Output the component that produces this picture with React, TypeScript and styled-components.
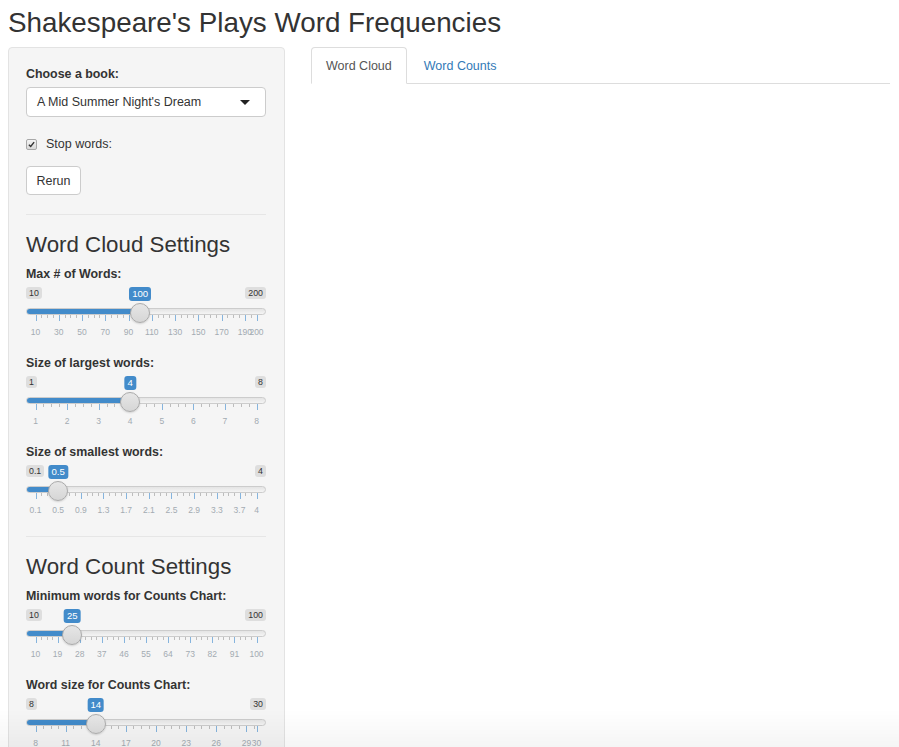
import styled, { createGlobalStyle } from "styled-components";

const GlobalStyle = createGlobalStyle`
  body {
    margin: 0;
    font-family: "Liberation Sans", Arial, sans-serif;
    font-size: 12.5px;
    color: #333;
    background: #fff;
  }
`;

const StyledPage = styled.div`
  padding: 8px 9px 0 8px;
`;

const StyledTitle = styled.h1`
  margin: 0 0 9px;
  font-size: 27.8px;
  line-height: 30px;
  font-weight: 500;
  color: #333;
`;

const StyledRow = styled.div`
  display: flex;
  align-items: flex-start;
  gap: 26px;
`;

const StyledWell = styled.div`
  width: 277px;
  box-sizing: border-box;
  flex-shrink: 0;
  min-height: 760px;
  padding: 18px 18px 0 17px;
  background: #f5f5f5;
  border: 1px solid #e3e3e3;
  border-radius: 4px;
`;

const StyledLabel = styled.div`
  font-weight: bold;
  font-size: 12.4px;
  line-height: 16px;
  margin-bottom: 5px;
`;

const StyledSelect = styled.div`
  height: 30px;
  box-sizing: border-box;
  display: flex;
  align-items: center;
  justify-content: space-between;
  padding: 0 15px 0 10px;
  background: #fff;
  border: 1px solid #ccc;
  border-radius: 4px;
`;

const StyledCaret = styled.span`
  width: 0;
  height: 0;
  border-left: 5px solid transparent;
  border-right: 5px solid transparent;
  border-top: 5px solid #222;
`;

const StyledCheckRow = styled.div`
  margin-top: 19px;
  height: 16px;
  display: flex;
  align-items: center;
  gap: 9px;
`;

const StyledCheckbox = styled.span`
  width: 9px;
  height: 9px;
  border: 1px solid #a8a8a8;
  border-radius: 2px;
  background: linear-gradient(#f4f4f4, #d9d9d9);
  display: flex;
  align-items: center;
  justify-content: center;
`;

const StyledButton = styled.div`
  margin-top: 14px;
  width: 55px;
  height: 29px;
  box-sizing: border-box;
  display: flex;
  align-items: center;
  justify-content: center;
  background: #fff;
  border: 1px solid #ccc;
  border-radius: 4px;
`;

const StyledDivider = styled.hr<{ $top: number }>`
  margin: ${(p) => p.$top}px 0 18px;
  border: 0;
  border-top: 1px solid #e6e6e6;
`;

const StyledHeading = styled.h3`
  margin: 0 0 9px;
  font-size: 22.3px;
  line-height: 24px;
  font-weight: 500;
`;

const StyledSlider = styled.div`
  margin-bottom: 18px;
`;

const StyledIrs = styled.div`
  position: relative;
`;

const StyledEdgeRow = styled.div`
  margin-top: 1px;
  height: 12px;
  display: flex;
  justify-content: space-between;
`;

const StyledEdgeTag = styled.span`
  font-size: 8.8px;
  line-height: 12px;
  padding: 0 3px;
  background: #dedede;
  color: #333;
  border-radius: 3px;
`;

const StyledValueTag = styled.span`
  position: absolute;
  top: 0;
  z-index: 2;
  transform: translateX(-50%);
  font-size: 9.6px;
  line-height: 14px;
  padding: 0 3px;
  background: #428bca;
  color: #fff;
  border-radius: 3px;
  white-space: nowrap;
`;

const StyledTrack = styled.div`
  margin-top: 9px;
  height: 7px;
  box-sizing: border-box;
  background: linear-gradient(#e4e4e4, #f4f4f4);
  border: 1px solid #ccc;
  border-radius: 8px;
  overflow: hidden;
  position: relative;
`;

const StyledFill = styled.div`
  height: 100%;
  background: #428bca;
`;

const StyledHandle = styled.span`
  position: absolute;
  top: 15.5px;
  z-index: 2;
  width: 20px;
  height: 20px;
  box-sizing: border-box;
  transform: translateX(-50%);
  border-radius: 50%;
  border: 1px solid #aaa;
  background: linear-gradient(#e6e6e6, #d6d6d6);
  box-shadow: 0 1px 2px rgba(0, 0, 0, 0.15);
`;

const StyledGrid = styled.div`
  position: relative;
  height: 22px;
`;

const StyledTick = styled.span<{ $major: boolean }>`
  position: absolute;
  top: 0;
  width: 1px;
  height: ${(p) => (p.$major ? 6 : 3)}px;
  background: ${(p) => (p.$major ? "#86b4dd" : "#bdbdbd")};
`;

const StyledTickLabel = styled.span`
  position: absolute;
  top: 12px;
  transform: translateX(-50%);
  font-size: 8.5px;
  line-height: 10px;
  color: #a3abb2;
  white-space: nowrap;
`;

const StyledMain = styled.div`
  flex: 1;
`;

const StyledTabs = styled.div`
  display: flex;
  border-bottom: 1px solid #ddd;
`;

const StyledTab = styled.div<{ $active?: boolean }>`
  padding: 2px 14px 0;
  margin-right: 2px;
  margin-bottom: -1px;
  line-height: 33px;
  border: 1px solid ${(p) => (p.$active ? "#ddd" : "transparent")};
  border-bottom-color: transparent;
  border-radius: 4px 4px 0 0;
  background: ${(p) => (p.$active ? "#fff" : "transparent")};
  color: ${(p) => (p.$active ? "#555" : "#337ab7")};
`;

const StyledFade = styled.div`
  position: fixed;
  left: 0;
  right: 0;
  bottom: 0;
  height: 38px;
  pointer-events: none;
  background: linear-gradient(rgba(0, 0, 0, 0), rgba(0, 0, 0, 0.04));
`;

type SliderProps = {
  label: string;
  min: number;
  max: number;
  value: number;
  majors: number[];
  minorStep: number;
};

const fmt = (v: number) => String(Math.round(v * 100) / 100);

const Slider = ({ label, min, max, value, majors, minorStep }: SliderProps) => {
  const pos = (v: number) =>
    `calc(9.5px + ${(v - min) / (max - min)} * (100% - 19px))`;
  const minors: number[] = [];
  for (let v = min; v <= max + 1e-9; v += minorStep) {
    if (!majors.some((m) => Math.abs(m - v) < 1e-6)) minors.push(v);
  }
  return (
    <StyledSlider>
      <StyledLabel>{label}</StyledLabel>
      <StyledIrs>
        <StyledEdgeRow>
          <StyledEdgeTag>{fmt(min)}</StyledEdgeTag>
          <StyledEdgeTag>{fmt(max)}</StyledEdgeTag>
        </StyledEdgeRow>
        <StyledValueTag style={{ left: pos(value) }}>{fmt(value)}</StyledValueTag>
        <StyledTrack>
          <StyledFill style={{ width: pos(value) }} />
        </StyledTrack>
        <StyledHandle style={{ left: pos(value) }} />
        <StyledGrid>
          {minors.map((v) => (
            <StyledTick key={`s${v}`} $major={false} style={{ left: pos(v) }} />
          ))}
          {majors.map((v) => (
            <StyledTick key={`b${v}`} $major style={{ left: pos(v) }} />
          ))}
          {majors.map((v) => (
            <StyledTickLabel key={`t${v}`} style={{ left: pos(v) }}>
              {fmt(v)}
            </StyledTickLabel>
          ))}
        </StyledGrid>
      </StyledIrs>
    </StyledSlider>
  );
};

const range = (start: number, step: number, count: number) =>
  Array.from({ length: count }, (_, i) => Math.round((start + step * i) * 100) / 100);

const App = () => {
  return (
    <StyledPage>
      <GlobalStyle />
      <StyledTitle>Shakespeare's Plays Word Frequencies</StyledTitle>
      <StyledRow>
        <StyledWell>
          <StyledLabel>Choose a book:</StyledLabel>
          <StyledSelect>
            <span>A Mid Summer Night's Dream</span>
            <StyledCaret />
          </StyledSelect>
          <StyledCheckRow>
            <StyledCheckbox>
              <svg width="7" height="7" viewBox="0 0 8 8">
                <path d="M1 4.2 L3.1 6.3 L7 1.3" fill="none" stroke="#333" strokeWidth="1.6" />
              </svg>
            </StyledCheckbox>
            <span>Stop words:</span>
          </StyledCheckRow>
          <StyledButton>Rerun</StyledButton>
          <StyledDivider $top={19} />
          <StyledHeading>Word Cloud Settings</StyledHeading>
          <Slider
            label="Max # of Words:"
            min={10}
            max={200}
            value={100}
            majors={[...range(10, 20, 10), 200]}
            minorStep={5}
          />
          <Slider
            label="Size of largest words:"
            min={1}
            max={8}
            value={4}
            majors={range(1, 1, 8)}
            minorStep={0.25}
          />
          <Slider
            label="Size of smallest words:"
            min={0.1}
            max={4}
            value={0.5}
            majors={[...range(0.1, 0.4, 10), 4]}
            minorStep={0.1}
          />
          <StyledDivider $top={21} />
          <StyledHeading>Word Count Settings</StyledHeading>
          <Slider
            label="Minimum words for Counts Chart:"
            min={10}
            max={100}
            value={25}
            majors={range(10, 9, 11)}
            minorStep={2.25}
          />
          <Slider
            label="Word size for Counts Chart:"
            min={8}
            max={30}
            value={14}
            majors={[...range(8, 3, 8), 30]}
            minorStep={0.75}
          />
        </StyledWell>
        <StyledMain>
          <StyledTabs>
            <StyledTab $active>Word Cloud</StyledTab>
            <StyledTab>Word Counts</StyledTab>
          </StyledTabs>
        </StyledMain>
      </StyledRow>
      <StyledFade />
    </StyledPage>
  );
};

export default App;
